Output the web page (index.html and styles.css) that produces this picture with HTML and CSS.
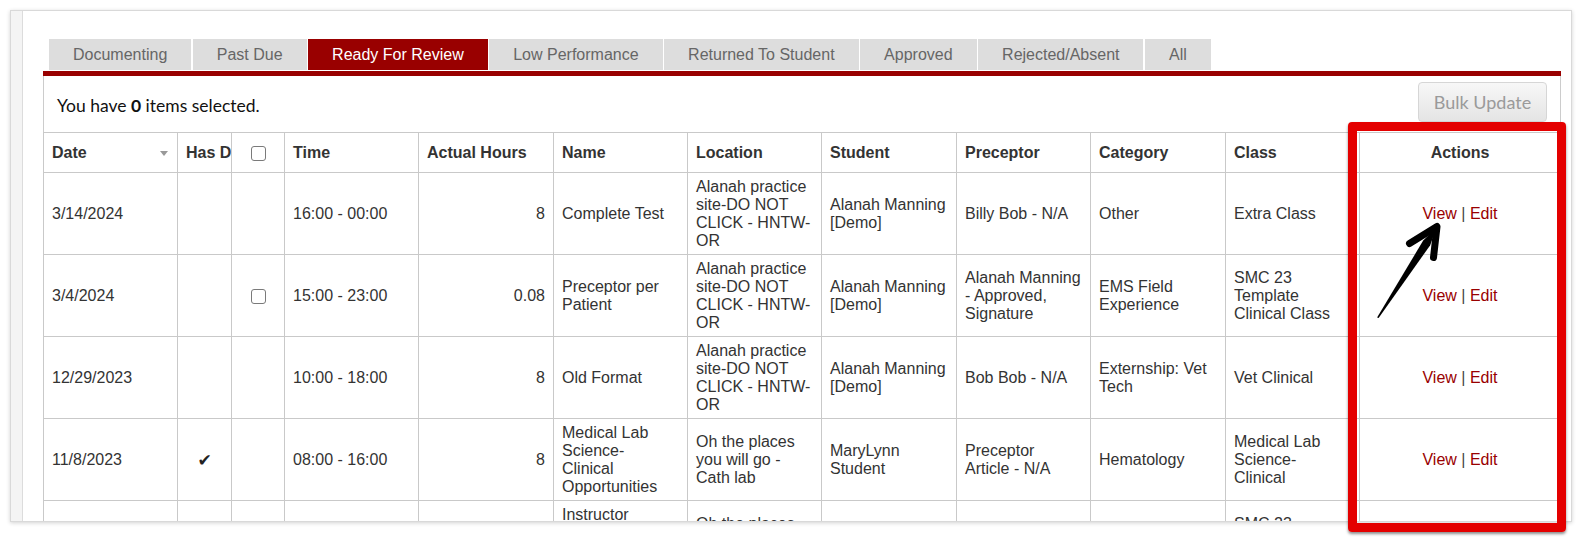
FILE: index.html
```html
<!DOCTYPE html>
<html lang="en">
<head>
<meta charset="utf-8">
<title>Shift Review</title>
<link rel="stylesheet" href="styles.css">
</head>
<body>
<div class="frame">
  <div class="strip"></div>
  <div class="main">
    <ul class="tabs">
      <li class="tab">Documenting</li>
      <li class="tab">Past Due</li>
      <li class="tab active">Ready For Review</li>
      <li class="tab">Low Performance</li>
      <li class="tab">Returned To Student</li>
      <li class="tab">Approved</li>
      <li class="tab">Rejected/Absent</li>
      <li class="tab">All</li>
    </ul>
    <div class="panel">
      <div class="toolbar">
        <div class="selected">You have <b>0</b> items selected.</div>
        <button class="bulk" type="button" disabled>Bulk Update</button>
      </div>
      <table class="grid">
        <colgroup>
          <col class="c-date"><col class="c-has"><col class="c-chk"><col class="c-std"><col class="c-wide">
          <col class="c-std"><col class="c-std"><col class="c-wide"><col class="c-std"><col class="c-wide"><col class="c-std"><col class="c-act">
        </colgroup>
        <thead>
          <tr>
            <th>Date <span class="sort"></span></th>
            <th class="clip">Has Documents</th>
            <th class="center"><input class="check" type="checkbox"></th>
            <th>Time</th>
            <th>Actual Hours</th>
            <th>Name</th>
            <th>Location</th>
            <th>Student</th>
            <th>Preceptor</th>
            <th>Category</th>
            <th>Class</th>
            <th class="center">Actions</th>
          </tr>
        </thead>
        <tbody>
          <tr>
            <td>3/14/2024</td>
            <td></td>
            <td></td>
            <td>16:00 - 00:00</td>
            <td class="num">8</td>
            <td>Complete Test</td>
            <td>Alanah practice site-DO NOT CLICK - HNTW-OR</td>
            <td>Alanah Manning [Demo]</td>
            <td>Billy Bob - N/A</td>
            <td>Other</td>
            <td>Extra Class</td>
            <td class="center"><a class="link" href="#">View</a> <span class="sep">|</span> <a class="link" href="#">Edit</a></td>
          </tr>
          <tr>
            <td>3/4/2024</td>
            <td></td>
            <td class="center"><input class="check" type="checkbox"></td>
            <td>15:00 - 23:00</td>
            <td class="num">0.08</td>
            <td>Preceptor per Patient</td>
            <td>Alanah practice site-DO NOT CLICK - HNTW-OR</td>
            <td>Alanah Manning [Demo]</td>
            <td>Alanah Manning - Approved, Signature</td>
            <td>EMS Field Experience</td>
            <td>SMC 23 Template Clinical Class</td>
            <td class="center"><a class="link" href="#">View</a> <span class="sep">|</span> <a class="link" href="#">Edit</a></td>
          </tr>
          <tr>
            <td>12/29/2023</td>
            <td></td>
            <td></td>
            <td>10:00 - 18:00</td>
            <td class="num">8</td>
            <td>Old Format</td>
            <td>Alanah practice site-DO NOT CLICK - HNTW-OR</td>
            <td>Alanah Manning [Demo]</td>
            <td>Bob Bob - N/A</td>
            <td>Externship: Vet Tech</td>
            <td>Vet Clinical</td>
            <td class="center"><a class="link" href="#">View</a> <span class="sep">|</span> <a class="link" href="#">Edit</a></td>
          </tr>
          <tr>
            <td>11/8/2023</td>
            <td class="center tick">&#10004;</td>
            <td></td>
            <td>08:00 - 16:00</td>
            <td class="num">8</td>
            <td>Medical Lab Science-<br>Clinical Opportunities</td>
            <td>Oh the places you will go - Cath lab</td>
            <td>MaryLynn Student</td>
            <td>Preceptor Article - N/A</td>
            <td>Hematology</td>
            <td>Medical Lab Science-<br>Clinical</td>
            <td class="center"><a class="link" href="#">View</a> <span class="sep">|</span> <a class="link" href="#">Edit</a></td>
          </tr>
          <tr>
            <td>10/2/2023</td>
            <td></td>
            <td></td>
            <td>07:00 - 15:00</td>
            <td class="num">8</td>
            <td>Instructor Observation Competency Evaluation</td>
            <td>Oh the places you will go - Cath lab</td>
            <td>Alanah Manning [Demo]</td>
            <td>Bob Bob - N/A</td>
            <td>Other</td>
            <td>SMC 23 Template Clinical Class</td>
            <td class="center"><a class="link" href="#">View</a> <span class="sep">|</span> <a class="link" href="#">Edit</a></td>
          </tr>
        </tbody>
      </table>
    </div>
  </div>
</div>
<div class="callout"></div>
<svg class="arrow" width="1582" height="546" viewBox="0 0 1582 546" aria-hidden="true">
  <polygon points="1377.1,317.4 1378.6,318.1 1430.2,245.2 1436.5,227.5 1423.2,240.6" fill="#000"/>
  <path d="M1409.5,243.5 L1437,226.5 L1433.5,257.5" fill="none" stroke="#000" stroke-width="7" stroke-linecap="round" stroke-linejoin="round"/>
</svg>
</body>
</html>
```

FILE: styles.css
```css
html, body {
  margin: 0;
  padding: 0;
  background: #ffffff;
}

body {
  width: 1582px;
  height: 546px;
  position: relative;
  overflow: hidden;
  font-family: "Liberation Sans", Arial, sans-serif;
}

.frame {
  box-sizing: border-box;
  margin: 10px 0 0 10px;
  width: 1562px;
  height: 512px;
  border: 1px solid #d9d9d9;
  box-shadow: 0 1px 4px rgba(0, 0, 0, 0.18);
  display: flex;
  overflow: hidden;
  background: #ffffff;
}

.strip {
  width: 11px;
  flex: none;
  background: #f4f4f4;
  border-right: 1px solid #dcdcdc;
}

.main {
  flex: 1;
  padding: 28px 10px 0 20px;
  min-width: 0;
}

.tabs {
  list-style: none;
  margin: 0 0 1px 6px;
  padding: 0;
  display: flex;
  gap: 1.5px;
}

.tab {
  height: 31px;
  line-height: 31px;
  padding: 0 24px;
  background: #dddddd;
  color: #666666;
  font-size: 16px;
  white-space: nowrap;
}

.tab.active {
  background: #990000;
  color: #ffffff;
}

.panel {
  border-top: 5px solid #990000;
}

.toolbar {
  box-sizing: border-box;
  height: 56px;
  border-left: 1px solid #cccccc;
  border-right: 1px solid #cccccc;
  padding: 6px 13px 0 13px;
  display: flex;
  justify-content: space-between;
  align-items: flex-start;
}

.selected {
  margin-top: 12px;
  font-family: Lato, "Open Sans", sans-serif;
  font-size: 17.5px;
  line-height: 24px;
  color: #111111;
}

.selected b {
  font-weight: 700;
}

.bulk {
  width: 129px;
  height: 40px;
  border: 1px solid #d6d6d6;
  border-radius: 4px;
  background: linear-gradient(#f7f7f7, #e4e4e4);
  color: #9a9a9a;
  font-family: Lato, "Open Sans", sans-serif;
  font-size: 18px;
  padding: 0;
}

.grid {
  width: 1518px;
  table-layout: fixed;
  border-collapse: collapse;
  font-size: 16px;
  line-height: 18px;
  color: #333333;
}

.c-date { width: 134px; }
.c-has { width: 54px; }
.c-chk { width: 53px; }
.c-std { width: 134px; }
.c-wide { width: 135px; }
.c-act { width: auto; }

.grid th,
.grid td {
  border: 1px solid #c9c9c9;
  padding: 0 8px;
  text-align: left;
  vertical-align: middle;
}

.grid th {
  height: 39px;
  font-weight: 700;
  color: #333333;
  white-space: nowrap;
  overflow: hidden;
}

.grid td {
  height: 81px;
}

.grid .center {
  text-align: center;
}

.grid .num {
  text-align: right;
}

.grid .clip {
  overflow: hidden;
  text-overflow: clip;
}

.sort {
  float: right;
  margin-top: 7px;
  margin-right: 1px;
  width: 0;
  height: 0;
  border-left: 4px solid transparent;
  border-right: 4px solid transparent;
  border-top: 5px solid #999999;
}

.check {
  -webkit-appearance: none;
  appearance: none;
  display: inline-block;
  vertical-align: middle;
  box-sizing: border-box;
  width: 15px;
  height: 15px;
  margin: 0;
  border: 1px solid #7a7a7a;
  border-radius: 3px;
  background: #ffffff;
}

.tick {
  font-family: "DejaVu Sans", sans-serif;
  font-size: 17px;
  color: #222222;
}

.link {
  color: #990000;
  text-decoration: none;
}

.sep {
  color: #444444;
}

.callout {
  position: absolute;
  left: 1348px;
  top: 122px;
  width: 218px;
  height: 410px;
  box-sizing: border-box;
  border: 9px solid #e40000;
  border-radius: 4px;
  box-shadow: 0 2px 3px rgba(0, 0, 0, 0.45);
}

.arrow {
  position: absolute;
  left: 0;
  top: 0;
  pointer-events: none;
}
```
